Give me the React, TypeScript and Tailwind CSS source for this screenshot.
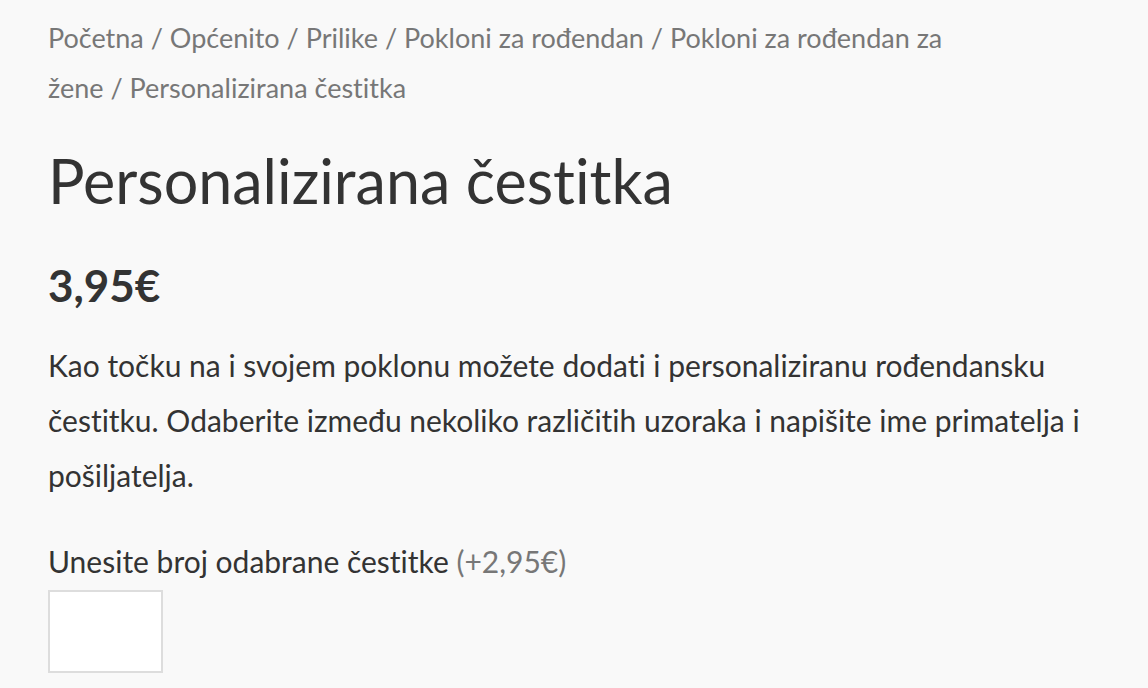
export default function App() {
  return (
    <div className="min-h-[688px] w-full bg-[#f9f9f9] px-12 pt-[13px] font-['Lato',sans-serif] text-[#333] [font-variant-ligatures:none]">
      <nav className="max-w-[940px] text-[27px] leading-[50px] text-[#777]">
        Početna / Općenito / Prilike / Pokloni za rođendan / Pokloni za rođendan za žene / Personalizirana čestitka
      </nav>
      <h1 className="mt-[32px] text-[61px] leading-[72px] font-normal">Personalizirana čestitka</h1>
      <p className="mt-[40px] text-[44px] leading-[56px] font-bold">3,95€</p>
      <p className="mt-[25px] text-[30px] leading-[55px]">
        Kao točku na i svojem poklonu možete dodati i personaliziranu rođendansku čestitku. Odaberite između nekoliko različitih uzoraka i napišite ime primatelja i pošiljatelja.
      </p>
      <label className="mt-[38px] block text-[30px] leading-[40px]">
        Unesite broj odabrane čestitke <span className="text-[#777]">(+2,95€)</span>
      </label>
      <input type="text" className="mt-[9px] h-[83px] w-[115px] border-2 border-[#ddd] bg-white" />
    </div>
  );
}
